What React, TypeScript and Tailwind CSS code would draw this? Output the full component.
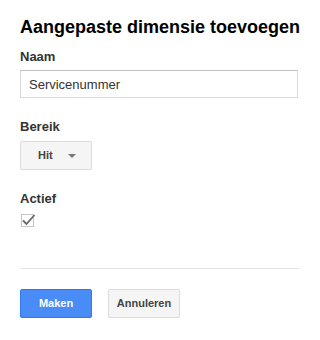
export default function App() {
  return (
    <div className="min-h-[340px] w-[320px] bg-white px-5 font-['Liberation_Sans',Arial,sans-serif] text-[#222]">
      <h1 className="whitespace-nowrap pt-[17px] text-[18px] font-bold leading-5 text-black">Aangepaste dimensie toevoegen</h1>

      <div className="mt-[12px] text-[13px] font-bold leading-4 text-[#333]">Naam</div>
      <input
        className="mt-[5px] block h-[28px] w-[278px] border border-[#d9d9d9] border-t-[#c0c0c0] px-2 text-[13px] text-[#333] outline-none"
        defaultValue="Servicenummer"
      />

      <div className="mt-[21px] text-[13px] font-bold leading-4 text-[#333]">Bereik</div>
      <button className="mt-[6px] flex h-[29px] w-[72px] items-center rounded-[2px] border border-[#dcdcdc] bg-[#f5f5f5] pl-[17px] text-[11px] font-bold text-[#444]">
        Hit
        <span className="ml-[15px] mt-[1px] h-0 w-0 border-x-[4px] border-t-[4px] border-x-transparent border-t-[#777]" />
      </button>

      <div className="mt-[21px] text-[13px] font-bold leading-4 text-[#333]">Actief</div>
      <div className="mt-[7px] ml-px flex h-[13px] w-[13px] items-center justify-center border border-[#c6c6c6] bg-white">
        <svg width="15" height="13" viewBox="0 0 15 13" className="-mt-[3px] ml-[2px] shrink-0">
          <path d="M2 7.5 L5.5 11 L13.5 2" fill="none" stroke="#666" strokeWidth="1.8" />
        </svg>
      </div>

      <div className="mt-[41px] h-px w-[280px] bg-[#e5e5e5]" />

      <div className="mt-[20px] flex gap-4">
        <button className="h-[29px] w-[72px] rounded-[2px] border border-[#3079ed] bg-[#4a8cf7] text-[11px] font-bold text-white">
          Maken
        </button>
        <button className="h-[29px] w-[72px] rounded-[2px] border border-[#dcdcdc] bg-[#f5f5f5] text-[11px] font-bold text-[#444]">
          Annuleren
        </button>
      </div>
    </div>
  );
}
